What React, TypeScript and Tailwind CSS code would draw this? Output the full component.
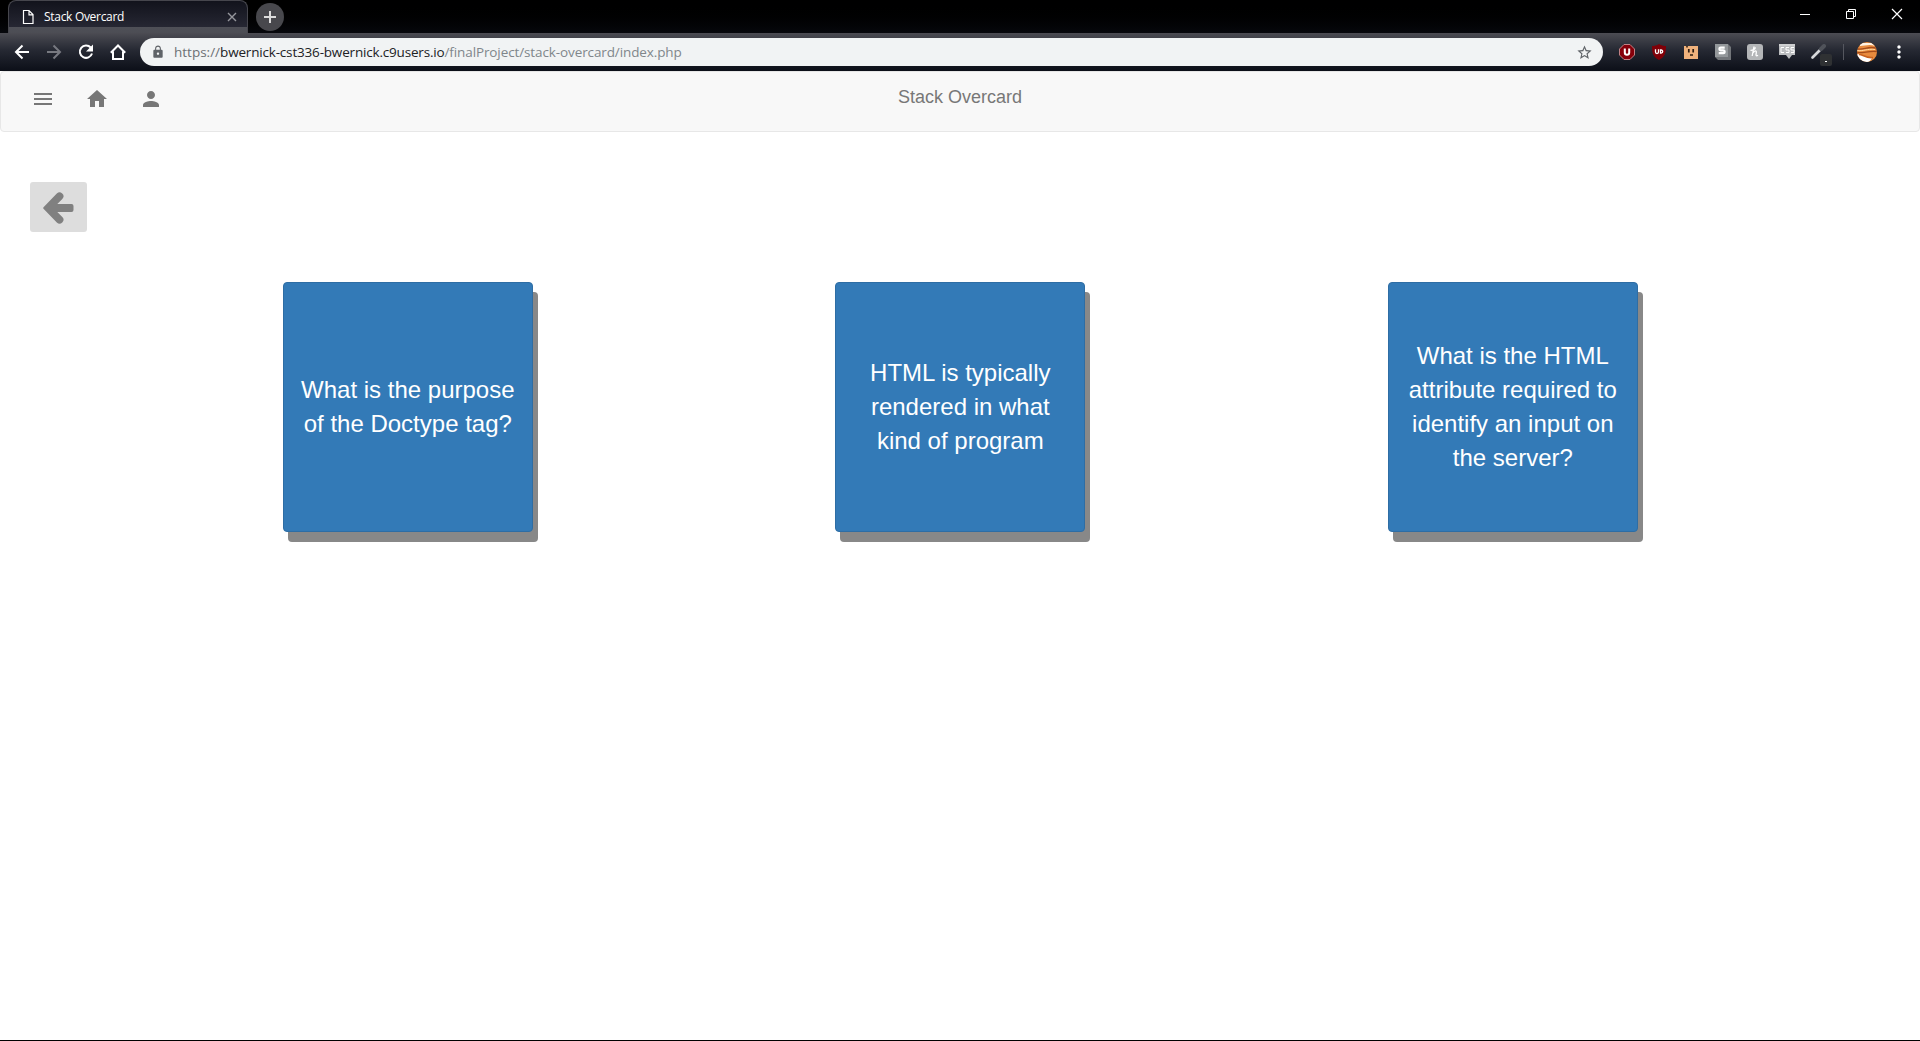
import { MdMenu, MdHome, MdPerson, MdLock, MdStarBorder, MdMoreVert } from "react-icons/md";

const cards = [
  ["What is the purpose", "of the Doctype tag?"],
  ["HTML is typically", "rendered in what", "kind of program"],
  ["What is the HTML", "attribute required to", "identify an input on", "the server?"],
];

function TabStrip() {
  return (
    <div className="flex h-[33px] items-start bg-gradient-to-b from-black to-[#07080d] pl-2">
      <div className="h-[33px] w-[240px] shrink-0 overflow-hidden rounded-t-lg border border-b-0 border-[#46464d] bg-gradient-to-b from-[#5a5b63] to-[#4c4d54]">
        <div className="flex h-[26px] items-end bg-gradient-to-b from-[#12131c] to-[#262733] pl-[13px] pr-[10px]">
          <svg className="mb-[2px]" width="12" height="16" viewBox="0 0 12 16" fill="none" stroke="#fff" strokeWidth="1.2">
            <path d="M1.500 1.500h5.500l4 4v9h-9.500zM7 1.500v4.300h4" />
          </svg>
          <span className="mb-px ml-[10px] whitespace-nowrap text-[12px] leading-[18px] tracking-[-0.3px] text-white">Stack Overcard</span>
          <svg className="mb-[5px] ml-auto" width="10" height="10" viewBox="0 0 10 10" stroke="#96979d" strokeWidth="1.4">
            <path d="M1 1l8 8M9 1l-8 8" />
          </svg>
        </div>
      </div>
      <div className="ml-2 mt-[3px] flex size-7 items-center justify-center rounded-full bg-[#48484d]">
        <svg width="12" height="12" viewBox="0 0 12 12" stroke="#dcdcdc" strokeWidth="2">
          <path d="M6 0v12M0 6h12" />
        </svg>
      </div>
      <div className="ml-auto mr-[17px] mt-2 flex gap-[34px]">
        <svg width="12" height="12" viewBox="0 0 12 12" stroke="#fff"><path d="M1 6.500h10" /></svg>
        <svg width="12" height="12" viewBox="0 0 12 12" stroke="#fff" fill="none"><path d="M1.500 3.500h7v7h-7zM3.500 3.500v-2h7v7h-2" /></svg>
        <svg width="12" height="12" viewBox="0 0 12 12" stroke="#fff" strokeWidth="1.2"><path d="M1 1l10 10M11 1L1 11" /></svg>
      </div>
    </div>
  );
}

function Extensions() {
  return (
    <div className="flex items-center gap-4">
      <svg width="16" height="16" viewBox="0 0 16 16">
        <path d="M5 .5h6L15.500 5v6L11 15.500H5L.5 11V5z" fill="#86000a" stroke="#c08084" />
        <path d="M5.800 4.500v4a2.200 2.200 0 0 0 4.400 0v-4" fill="none" stroke="#fff" strokeWidth="2" />
      </svg>
      <svg width="16" height="16" viewBox="0 0 16 16">
        <path d="M8 0c2 1.600 4.500 2 7 2 0 7-1 11-7 14C2 13 1 9 1 2c2.500 0 5-.4 7-2z" fill="#800008" />
        <path d="M4.500 5.300v2.700a1.500 1.500 0 0 0 3 0V5.300M9.500 6v3h.7a1.500 1.500 0 0 0 0-3z" fill="none" stroke="#fff" strokeWidth="1.300" />
      </svg>
      <svg width="16" height="16" viewBox="0 0 16 16">
        <path d="M1 2h14v13H1z" fill="#f0b27c" />
        <path d="M3 2h2v1.500H3z" fill="#5a3c22" />
        <path d="M5.800 5v3.500M10.200 5v3.500M7 11h3" stroke="#2b1c10" strokeWidth="1.700" />
      </svg>
      <svg width="16" height="16" viewBox="0 0 16 16">
        <path d="M0 0h13l3 3v13H3l-3-3z" fill="#73767a" />
        <path d="M0 0h13v13H0z" fill="#94989b" />
        <path d="M9.700 3.700H5.700a1.300 1.300 0 0 0 0 2.700h2.500a1.400 1.400 0 0 1 0 2.800H3.700" fill="none" stroke="#fff" strokeWidth="2.200" />
      </svg>
      <svg width="16" height="16" viewBox="0 0 16 16">
        <rect width="16" height="16" rx="3" fill="#b4b6b8" />
        <path d="M7 2.500L5.200 12M3.500 6.300c2 .2 5-1 4.800-3M6.300 8.500c1.800-2.200 3.200-2 3 0l-.3 2.500q.2 1.500 2 .2" fill="none" stroke="#fff" strokeWidth="1.300" />
      </svg>
      <svg width="16" height="16" viewBox="0 0 16 16">
        <path d="M0 0h16v11h-3l-3 4-3-4H0z" fill="#bcbec0" />
        <path d="M5 3.500H2v5h3M10 3.500H7V6h3v2.500H7M15 3.500h-3V6h3v2.500h-3" fill="none" stroke="#fff" />
        <path d="M0 1h16" stroke="#dfe0e1" />
      </svg>
      <svg width="22" height="22" viewBox="0 0 22 22" className="mt-[5px]">
        <path d="M1.500 13.500l8-8" stroke="#d6d8db" strokeWidth="2.600" strokeLinecap="round" />
        <path d="M10 5l3-3" stroke="#50535a" strokeWidth="4" strokeLinecap="round" />
        <rect x="9" y="10" width="12" height="12" rx="2" fill="#2f3133" />
        <path d="M14 17.500h2" stroke="#fff" strokeWidth="1.200" />
      </svg>
    </div>
  );
}

function Avatar() {
  return (
    <svg className="ml-[13px] size-5" viewBox="0 0 20 20">
      <clipPath id="avatar"><circle cx="10" cy="10" r="10" /></clipPath>
      <g clipPath="url(#avatar)" fill="none">
        <rect width="20" height="20" fill="#e88b3e" />
        <path d="M3 1h12l3 3C12 2 8 4 3 4z" fill="#fff3e2" />
        <path d="M1 7c6 1 10-3 18-1M0 10.500c6 1 12-2 20-1" stroke="#a44c1b" strokeWidth="1.300" />
        <path d="M0 8.500c6 1 10-2 18-1" stroke="#ffd9a0" strokeWidth="1" />
        <path d="M0 12c4 0 9 4 16 3l-4 5H0z" fill="#fff" />
        <path d="M2 12.500c4 0 7 4 14 3" stroke="#c8621f" strokeWidth="1.600" />
      </g>
    </svg>
  );
}

function Toolbar() {
  return (
    <div className="flex h-[38px] items-center bg-gradient-to-b from-[#4c4c53] via-[#262933] via-45% to-[#0c0f18] pl-3">
      <svg className="size-5" viewBox="0 0 20 20" fill="none" stroke="#fff" strokeWidth="2">
        <path d="M17 10H4.500M10.500 3.500L4 10l6.500 6.500" />
      </svg>
      <svg className="ml-3 size-5" viewBox="0 0 20 20" fill="none" stroke="#777980" strokeWidth="2">
        <path d="M3 10h12.500M9.500 3.500L16 10l-6.500 6.500" />
      </svg>
      <svg className="ml-3 size-5" viewBox="0 0 20 20" fill="none" stroke="#fff" strokeWidth="2">
        <path d="M14.700 5.500A6.200 6.200 0 1 0 16 11.500" />
        <path d="M17 2.500v7h-7z" fill="#fff" stroke="none" />
      </svg>
      <svg className="ml-3 size-5" viewBox="0 0 20 20" fill="none" stroke="#fff" strokeWidth="2">
        <path d="M2.800 10.700L10 3.500l7.200 7.200M5 9.500V17h10V9.500" />
      </svg>
      <div className="ml-3 flex h-7 w-[1463px] shrink-0 items-center rounded-full bg-[#f1f3f4] pl-[11px] pr-[10px] text-[13.5px]">
        <MdLock className="size-[14px] text-[#5f6368]" />
        <span className="ml-[9px] whitespace-nowrap tracking-[-0.11px] text-[#80868b]">
          <span className="tracking-normal text-[#6c7075]">https://</span>
          <span className="tracking-[-0.18px] text-[#202124]">bwernick-cst336-bwernick.c9users.io</span>
          /finalProject/stack-overcard/index.php
        </span>
        <MdStarBorder className="ml-auto size-[17px] text-[#5f6368]" />
      </div>
      <div className="ml-4"><Extensions /></div>
      <div className="ml-[10px] h-4 w-px bg-[#55575f]" />
      <Avatar />
      <MdMoreVert className="ml-3 size-5 text-white" />
    </div>
  );
}

export default function App() {
  return (
    <div className="flex h-[1041px] w-[1920px] flex-col overflow-hidden border-b border-black bg-white">
      <header className="font-['Open_Sans',sans-serif]">
        <TabStrip />
        <Toolbar />
      </header>
      <main className="font-['Liberation_Sans',Arial,sans-serif]">
        <nav className="grid h-[61px] grid-cols-3 rounded-[4px] border border-[#e7e7e7] bg-[#f8f8f8] text-[#777]">
          <div className="flex gap-[30px] pl-[30px] pt-[15px]">
            <MdMenu className="size-6" />
            <MdHome className="size-6" />
            <MdPerson className="size-6" />
          </div>
          <h1 className="pt-[15px] text-center text-[18px] leading-5">Stack Overcard</h1>
        </nav>
        <button className="ml-[30px] mt-[50px] flex h-[50px] w-[57px] items-center justify-center rounded-[3px] bg-[#ddd] pt-[2px]">
          <svg width="31" height="32" viewBox="0 0 31 32" fill="#808080">
            <path d="M.5 15.200L13.800 1.600A3.700 3.700 0 0 1 19.300 7L14.300 12H28.500q2 0 2 2v4q0 2-2 2H14.300l5 5A3.700 3.700 0 0 1 13.800 30.400L.5 16.800q-.6-.8 0-1.600z" />
          </svg>
        </button>
        <section className="mt-[50px] flex gap-[302.5px] pl-[282.8px]">
          {cards.map((lines) => (
            <div
              key={lines[0]}
              className="flex size-[250px] shrink-0 flex-col items-center justify-center rounded-[4px] border border-[#2e6da4] bg-[#337ab7] text-2xl leading-[34px] text-white shadow-[5px_10px_0_#888]"
            >
              {lines.map((line) => (
                <span key={line} className="whitespace-nowrap">{line}</span>
              ))}
            </div>
          ))}
        </section>
      </main>
    </div>
  );
}
